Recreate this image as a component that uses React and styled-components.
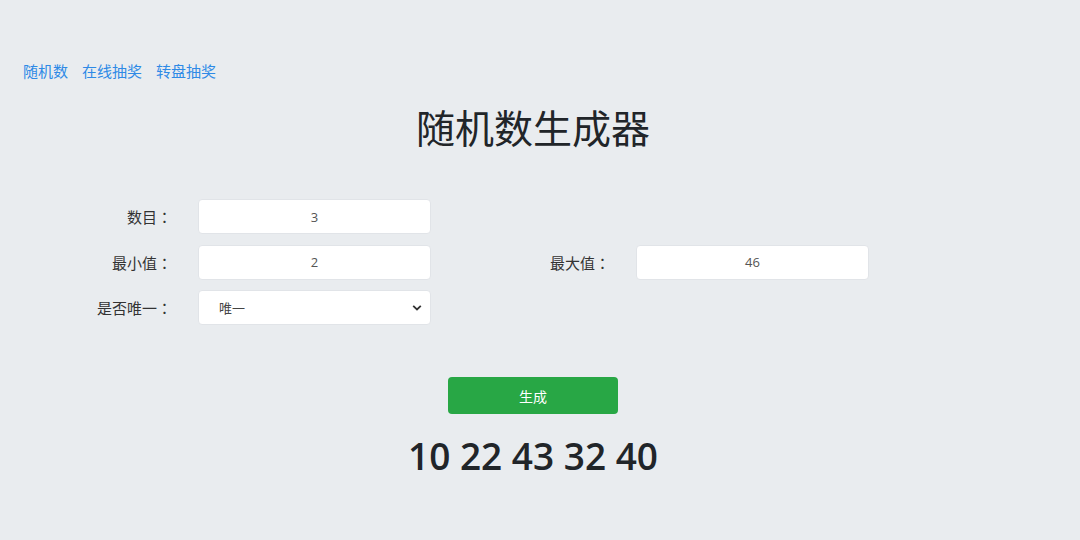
import { useState } from "react";
import styled, { createGlobalStyle } from "styled-components";

const GlobalStyle = createGlobalStyle`
  * { box-sizing: border-box; }
  html, body {
    margin: 0;
    background: #e9ecef;
  }
  body {
    font-family: "Noto Sans CJK SC", "Open Sans", sans-serif;
    color: #212529;
  }
`;

const Page = styled.div`
  width: 1066px;
  min-height: 540px;
  padding-top: 60px;
`;

const Nav = styled.nav`
  display: flex;
  gap: 14px;
  padding-left: 23px;
`;

const NavLink = styled.a`
  font-size: 15px;
  line-height: 22px;
  color: #2e8ae6;
  text-decoration: none;
  cursor: pointer;
`;

const Title = styled.h1`
  margin: 18px 0 0;
  text-align: center;
  font-size: 39px;
  font-weight: 400;
  line-height: 52px;
  color: #212529;
`;

const Form = styled.div`
  display: grid;
  grid-template-columns: 198px 233px 205px 233px;
  grid-auto-rows: 35px;
  row-gap: 10.5px;
  margin-top: 47px;
`;

const Label = styled.label`
  display: flex;
  align-items: center;
  justify-content: flex-end;
  padding-right: 26px;
  font-family: "Noto Sans CJK TC", "Noto Sans CJK SC", sans-serif;
  font-size: 15px;
  color: #333;
`;

const Field = styled.input`
  width: 100%;
  height: 100%;
  border: 1px solid #e1e4e8;
  border-radius: 4px;
  background: #fff;
  text-align: center;
  font-family: "Open Sans", "Noto Sans CJK SC", sans-serif;
  font-size: 13px;
  color: #555;
  outline: none;
`;

const SelectWrap = styled.div`
  position: relative;
`;

const Select = styled.select`
  appearance: none;
  width: 100%;
  height: 100%;
  border: 1px solid #e1e4e8;
  border-radius: 4px;
  background: #fff;
  padding-left: 20px;
  font-family: "Noto Sans CJK SC", sans-serif;
  font-size: 13px;
  color: #444;
  outline: none;
`;

const Chevron = styled.svg`
  position: absolute;
  right: 9px;
  top: 50%;
  transform: translateY(-50%);
  pointer-events: none;
`;

const Actions = styled.div`
  display: flex;
  flex-direction: column;
  align-items: center;
  margin-top: 52px;
`;

const Button = styled.button`
  width: 170px;
  height: 37px;
  border: none;
  border-radius: 4px;
  background: #28a745;
  color: #fff;
  font-family: "Noto Sans CJK SC", sans-serif;
  font-size: 14px;
  font-weight: 400;
  cursor: pointer;
`;

const Result = styled.div`
  margin-top: 17px;
  font-family: "Open Sans", sans-serif;
  font-size: 37px;
  font-weight: 600;
  line-height: 50px;
  color: #212529;
`;

export default function App() {
  const [count, setCount] = useState("3");
  const [min, setMin] = useState("2");
  const [max, setMax] = useState("46");
  const [unique, setUnique] = useState("1");
  const [numbers, setNumbers] = useState([10, 22, 43, 32, 40]);

  function generate() {
    const lo = parseInt(min, 10);
    const hi = parseInt(max, 10);
    const n = parseInt(count, 10);
    if (isNaN(lo) || isNaN(hi) || isNaN(n) || hi < lo) return;
    const out = [];
    while (out.length < n) {
      const v = lo + Math.floor(Math.random() * (hi - lo + 1));
      if (unique === "1" && out.includes(v)) {
        if (out.length >= hi - lo + 1) break;
        continue;
      }
      out.push(v);
    }
    setNumbers(out);
  }

  return (
    <>
      <GlobalStyle />
      <Page>
        <Nav>
          <NavLink>随机数</NavLink>
          <NavLink>在线抽奖</NavLink>
          <NavLink>转盘抽奖</NavLink>
        </Nav>
        <Title>随机数生成器</Title>
        <Form>
          <Label>数目：</Label>
          <Field value={count} onChange={(e) => setCount(e.target.value)} />
          <span />
          <span />

          <Label>最小值：</Label>
          <Field value={min} onChange={(e) => setMin(e.target.value)} />
          <Label>最大值：</Label>
          <Field value={max} onChange={(e) => setMax(e.target.value)} />

          <Label>是否唯一：</Label>
          <SelectWrap>
            <Select value={unique} onChange={(e) => setUnique(e.target.value)}>
              <option value="1">唯一</option>
              <option value="0">不唯一</option>
            </Select>
            <Chevron width="10" height="7" viewBox="0 0 10 7">
              <path d="M1.2 1.4 L5 5 L8.8 1.4" fill="none" stroke="#333" strokeWidth="1.8" />
            </Chevron>
          </SelectWrap>
        </Form>
        <Actions>
          <Button onClick={generate}>生成</Button>
          <Result>{numbers.join(" ")}</Result>
        </Actions>
      </Page>
    </>
  );
}
